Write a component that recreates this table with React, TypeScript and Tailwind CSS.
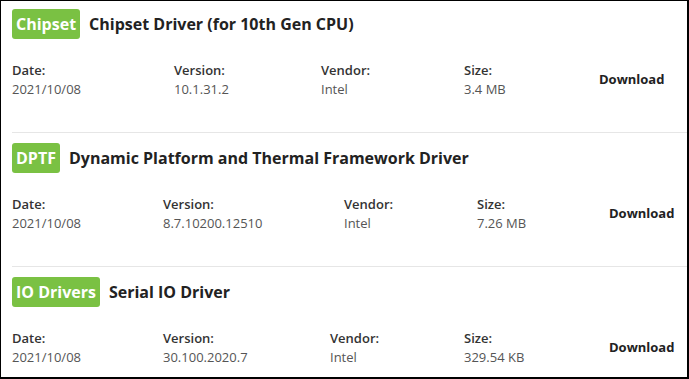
import React from "react";

type Item = {
  badge: string;
  title: string;
  date: string;
  version: string;
  vendor: string;
  size: string;
};

const font = { fontFamily: '"Open Sans", "Noto Sans", sans-serif' };

function Col({ label, value }: { label: string; value: string }) {
  return (
    <div className="flex flex-col">
      <span className="text-[13px] leading-[19px] font-semibold text-[#333]">{label}</span>
      <span className="text-[13px] leading-[19px] text-[#555]">{value}</span>
    </div>
  );
}

function Section({
  item,
  cols,
  first,
  last,
}: {
  item: Item;
  cols: string;
  first?: boolean;
  last?: boolean;
}) {
  return (
    <div
      className={`${first ? "pt-[8px]" : "pt-[10px]"} ${
        last ? "pb-0" : "pb-[33px] border-b border-[#e6e6e6]"
      }`}
    >
      <div className="flex items-center gap-[9px] h-[30px]">
        <span className="h-[30px] flex items-center px-[4px] rounded-[3px] bg-[#7ac143] text-white text-[16px] font-bold">
          {item.badge}
        </span>
        <span className="text-[16px] font-bold text-[#222]">{item.title}</span>
      </div>
      <div className={`grid ${cols} items-center mt-[22px]`}>
        <Col label="Date:" value={item.date} />
        <Col label="Version:" value={item.version} />
        <Col label="Vendor:" value={item.vendor} />
        <Col label="Size:" value={item.size} />
        <span className="text-[13px] font-bold text-[#222]">Download</span>
      </div>
    </div>
  );
}

export default function App() {
  return (
    <div
      style={font}
      className="w-[689px] h-[379px] bg-white border-l border-t border-r-2 border-b-2 border-black pl-[11px] overflow-hidden"
    >
      <Section
        first
        cols="grid-cols-[162px_147px_143px_135px_auto]"
        item={{
          badge: "Chipset",
          title: "Chipset Driver (for 10th Gen CPU)",
          date: "2021/10/08",
          version: "10.1.31.2",
          vendor: "Intel",
          size: "3.4 MB",
        }}
      />
      <Section
        cols="grid-cols-[151px_181px_133px_132px_auto]"
        item={{
          badge: "DPTF",
          title: "Dynamic Platform and Thermal Framework Driver",
          date: "2021/10/08",
          version: "8.7.10200.12510",
          vendor: "Intel",
          size: "7.26 MB",
        }}
      />
      <Section
        last
        cols="grid-cols-[151px_167px_134px_145px_auto]"
        item={{
          badge: "IO Drivers",
          title: "Serial IO Driver",
          date: "2021/10/08",
          version: "30.100.2020.7",
          vendor: "Intel",
          size: "329.54 KB",
        }}
      />
    </div>
  );
}
